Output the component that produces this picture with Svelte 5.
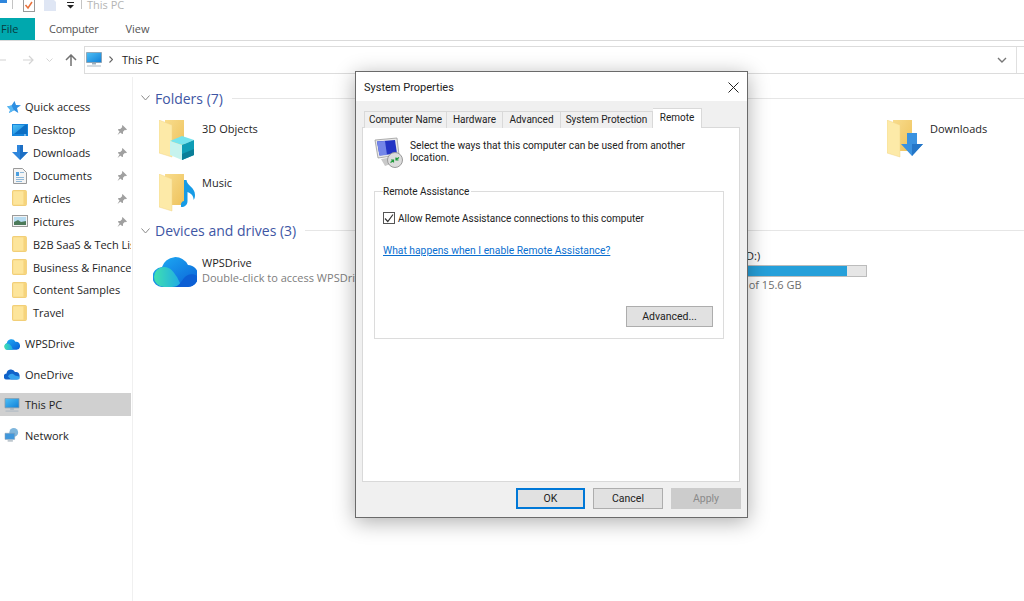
<script>
	const pinned = [
		{ name: 'Desktop', icon: 'desktop', pin: true },
		{ name: 'Downloads', icon: 'down', pin: true },
		{ name: 'Documents', icon: 'doc', pin: true },
		{ name: 'Articles', icon: 'smallfolder', pin: true },
		{ name: 'Pictures', icon: 'pics', pin: true },
		{ name: 'B2B SaaS & Tech Lis', icon: 'smallfolder' },
		{ name: 'Business & Finance', icon: 'smallfolder' },
		{ name: 'Content Samples', icon: 'smallfolder' },
		{ name: 'Travel', icon: 'smallfolder' }
	];
	const roots = [
		{ name: 'WPSDrive', icon: 'cloud' },
		{ name: 'OneDrive', icon: 'onedrive' },
		{ name: 'This PC', icon: 'monitor', active: true },
		{ name: 'Network', icon: 'network' }
	];
	const tabs = ['Computer Name', 'Hardware', 'Advanced', 'System Protection', 'Remote'];
	const tabWidths = [83, 56, 58, 92, 49];
	let allow = $state(true);
</script>

<svg class="defs" width="0" height="0">
	<defs>
		<linearGradient id="fold" x1="0" y1="0" x2="1" y2="1"><stop offset="0" stop-color="#f8dc8c" /><stop offset="1" stop-color="#eec25c" /></linearGradient>
		<linearGradient id="wps1" x1="0" y1="0" x2="1" y2="1"><stop offset="0" stop-color="#1fb0f5" /><stop offset="1" stop-color="#0a5fd6" /></linearGradient>
		<linearGradient id="wps2" x1="0" y1="0" x2="1" y2="0"><stop offset="0" stop-color="#3fe0b0" /><stop offset="1" stop-color="#1ea8e8" /></linearGradient>
		<linearGradient id="screen" x1="0" y1="0" x2="1" y2="1"><stop offset="0" stop-color="#4fc0f5" /><stop offset="1" stop-color="#0f7fd8" /></linearGradient>
		<symbol id="bigfolder" viewBox="0 0 36 40">
			<path d="M6 0H25V31H6Z" fill="url(#fold)" />
			<path d="M0 0 13 5V37L0 33Z" fill="#fdeaa8" stroke="#f2d488" stroke-width=".5" />
		</symbol>
		<symbol id="smallfolder" viewBox="0 0 14 14">
			<rect x=".5" y=".5" width="12" height="13" rx="1" fill="#fde59b" stroke="#f2cf78" />
			<path d="M10 1h2.500v12H10Z" fill="#f6d47c" />
		</symbol>
		<symbol id="desktop" viewBox="0 0 16 14">
			<path d="M0 1h16v12H0Z" fill="#1685dc" />
			<path d="M1 2h14v9H1Z" fill="url(#screen)" />
			<path d="M2 11 13 2h2v9Z" fill="#0c6fc4" />
			<path d="M12 11.500h2v1h-2Z" fill="#cfe6f8" />
		</symbol>
		<symbol id="down" viewBox="0 0 16 16">
			<path d="M5 0h6v7h5l-8 8-8-8h5Z" fill="#2f86dc" />
			<path d="M8 0h3v7h5l-8 8Z" fill="#1d6fc4" />
		</symbol>
		<symbol id="doc" viewBox="0 0 14 16">
			<path d="M.5.500h9l4 4v11H.5Z" fill="#f4f4f4" stroke="#9a9a9a" />
			<path d="M3 4h3v4H3Z" fill="#4a9fe0" />
			<path d="M7 4h4v1H7ZM3 9h8v1H3ZM3 11h8v1H3ZM3 13h6v1H3Z" fill="#8fb8d8" />
		</symbol>
		<symbol id="pics" viewBox="0 0 16 12">
			<rect x=".5" y=".5" width="15" height="11" fill="#f3f3f3" stroke="#9b9b9b" />
			<rect x="2" y="2" width="12" height="8" fill="#b7dcf2" />
			<path d="M2 10V7l4-2 3 2 5-1v4Z" fill="#4c7a5a" />
		</symbol>
		<symbol id="star" viewBox="0 0 14 12">
			<path d="M7.500 0 9 4l5 .3-4 2.800L11.300 12 7 9.200 2 12l2-4.500L0 5.500l4.500-1Z" fill="#2d8fe2" />
			<path d="M0 5.500 4.500 4.600 7 9.200 2 12l1-3Z" fill="#59b7f2" />
		</symbol>
		<symbol id="pin" viewBox="0 0 10 10">
			<path d="M5.500 0 10 4.500 8.800 5.200 8 4.800 6 6.800 6 8.700 5 9 1 5 1.400 4 3.300 4 5.300 2 4.900 1.200ZM2.500 6.500l1 1-3 2.500Z" fill="#a0a0a0" />
		</symbol>
		<symbol id="monitor" viewBox="0 0 16 15">
			<path d="M.5.500h15v10H.5Z" fill="url(#screen)" stroke="#8a9aa8" stroke-width=".8" />
			<path d="M6 11h4v1.500H6Z" fill="#9cb0bf" />
			<path d="M1 13.500h14v1H1Z" fill="#a9b7c2" />
		</symbol>
		<symbol id="cloud" viewBox="0 0 14 10">
			<path d="M3 10a3 3 0 0 1-.5-5.800A4 4 0 0 1 10 3a3.500 3.500 0 0 1 1 7Z" fill="url(#wps1)" />
			<path d="M3 10a2.700 2.700 0 0 1 0-5.400c1.500 0 2.500 1 3.500 2.400L8 10Z" fill="url(#wps2)" />
		</symbol>
		<symbol id="onedrive" viewBox="0 0 16 11">
			<path d="M3 11a3 3 0 0 1-.5-6A4.500 4.500 0 0 1 11 3.500 3.800 3.800 0 0 1 12.500 11Z" fill="#0f62c9" />
			<path d="M7 11 4 8c1-3 5-4 7-1l4 1c1 1 1 3-1 3Z" fill="#35a3ee" />
		</symbol>
		<symbol id="network" viewBox="0 0 16 16">
			<circle cx="10" cy="5" r="5" fill="#7fb6dc" />
			<path d="M0 6h11v7H0Z" fill="#3f97dc" stroke="#8ba0b0" stroke-width=".6" />
			<path d="M3 14h6v1.500H3Z" fill="#a8b4be" />
		</symbol>
		<symbol id="cube" viewBox="0 0 24 24">
			<path d="M0 5 12 0l12 4-12 5Z" fill="#74e4ee" />
			<path d="M0 5 12 9v15L0 19Z" fill="#c6f3ee" />
			<path d="M12 9 24 4v15l-12 5Z" fill="#0e9db6" />
			<path d="M12 18 24 13v6l-12 5Z" fill="#0a7e98" />
		</symbol>
		<symbol id="note" viewBox="0 0 14 27">
			<path d="M3 0h2.500c.5 6 8.500 7 8.500 15 0 2-.5 4-1.500 5 .5-4-3-7-6-8V21c0 4-3 6-6 6-2 0-.5-6 2.500-6Z" fill="#169be6" />
		</symbol>
		<symbol id="bigdown" viewBox="0 0 22 24">
			<path d="M6 0h10v11h6L11 23 0 11h6Z" fill="#3a92e0" />
			<path d="M11 11h11L11 23Z" fill="#2476c8" />
		</symbol>
		<symbol id="bigcloud" viewBox="0 0 44 33">
			<path d="M10 33A10 10 0 0 1 9 13 14 14 0 0 1 35 11 11 11 0 0 1 34 33Z" fill="url(#wps1)" />
			<path d="M11 33a10 10 0 0 1 0-20c7 0 10 6 13 10l5 10Z" fill="url(#wps2)" />
			<path d="M19 33c7 0 9-5 12-9 3-4 9-5 13-2 1 6-3 11-10 11Z" fill="#0c5fd4" />
		</symbol>
		<symbol id="rdp" viewBox="0 0 30 31">
			<path d="M1 3 23 1 25 18 4 21Z" fill="#e8e8e8" stroke="#8f8f8f" stroke-width=".7" />
			<path d="M3 4.500 21 3 23 16.500 5.500 18.500Z" fill="#2334c4" />
			<path d="M3 4.500 11 4 13 18 5.500 18.500Z" fill="#7486e8" />
			<path d="M7 22l12-2 3 5-11 4Z" fill="#c9c9c9" />
			<circle cx="21" cy="23" r="7.500" fill="#dcdcdc" stroke="#9a9a9a" />
			<path d="M16.500 25.500l3-2M19.500 25.500v-2.500h-2.500M25 20.500l-3 2M22 20.500v2.500h2.500" fill="none" stroke="#1f9a3a" stroke-width="1.200" />
		</symbol>
	</defs>
</svg>

<div class="explorer">
	<div class="qat">
		<svg class="qat-pc" width="8" height="10" viewBox="0 0 8 10"><path d="M0 0h7v7H0Z" fill="#2f86dc" /></svg>
		<span class="qat-sep first"></span>
		<svg class="qat-check" width="12" height="12" viewBox="0 0 12 12"><rect x=".5" y="-3" width="11" height="14.500" fill="#fff" stroke="#9a9a9a" /><path d="M2.500 5 5 8l4-6" fill="none" stroke="#e8703a" stroke-width="1.500" /></svg>
		<svg class="qat-doc" width="12" height="12" viewBox="0 0 12 12"><path d="M0 0h9l3 3v9H0Z" fill="#dfe6f4" /></svg>
		<svg class="qat-drop" width="7" height="7" viewBox="0 0 7 7"><path d="M0 0h7v1H0ZM0 3h7L3.500 6.500Z" fill="#222" /></svg>
		<span class="qat-sep"></span>
		<span class="qat-title">This PC</span>
	</div>

	<div class="ribbon">
		<div class="file-tab">File</div>
		<div class="rib-tab computer">Computer</div>
		<div class="rib-tab">View</div>
	</div>

	<div class="navbar">
		<svg class="nav-back" width="6" height="10" viewBox="0 0 6 10"><path d="M0 5h6" stroke="#d8d8d8" stroke-width="1.200" /></svg>
		<svg class="nav-fwd" width="11" height="10" viewBox="0 0 11 10"><path d="M0 5h10M6 1l4 4-4 4" fill="none" stroke="#d4d4d4" stroke-width="1.200" /></svg>
		<svg class="nav-hist" width="7" height="4" viewBox="0 0 7 4"><path d="M.5.500 3.500 3.500 6.500.5" fill="none" stroke="#d4d4d4" /></svg>
		<svg class="nav-up" width="12" height="12" viewBox="0 0 12 12"><path d="M6 12V1M1 6l5-5 5 5" fill="none" stroke="#727272" stroke-width="1.500" /></svg>
		<div class="address">
			<svg class="addr-pc" width="16" height="15"><use href="#monitor" /></svg>
			<svg class="addr-gt" width="4" height="7" viewBox="0 0 4 7"><path d="M.5.500 3.500 3.500.5 6.500" fill="none" stroke="#666" stroke-width="1.100" /></svg>
			<span class="addr-text">This PC</span>
			<svg class="addr-chev" width="10" height="6" viewBox="0 0 10 6"><path d="M1 1l4 4 4-4" fill="none" stroke="#777" stroke-width="1.400" /></svg>
			<span class="addr-div"></span>
		</div>
	</div>

	<div class="main">
		<nav class="sidebar">
			<div class="row top">
				<svg width="14" height="12"><use href="#star" /></svg>
				<span>Quick access</span>
			</div>
			{#each pinned as item}
				<div class="row sub">
					<svg class="row-icon" width="16" height="16"><use href={'#' + item.icon} /></svg>
					<span class="row-name">{item.name}</span>
					{#if item.pin}
						<svg class="pin" width="10" height="10"><use href="#pin" /></svg>
					{/if}
				</div>
			{/each}
			{#each roots as root}
				<div class="row top root" class:active={root.active}>
					<svg width="16" height="14"><use href={'#' + root.icon} /></svg>
					<span>{root.name}</span>
				</div>
			{/each}
		</nav>

		<section class="content">
			<div class="group-head">
				<svg width="9" height="6" viewBox="0 0 9 6"><path d="M.5.500 4.500 5 8.500.5" fill="none" stroke="#8a8a8a" /></svg>
				<span>Folders (7)</span>
				<i></i>
			</div>
			<div class="tiles">
				<div class="tile">
					<div class="tile-icon">
						<svg width="36" height="40"><use href="#bigfolder" /></svg>
						<svg class="badge cube" width="24" height="24"><use href="#cube" /></svg>
					</div>
					<span>3D Objects</span>
				</div>
				<div class="tile"></div>
				<div class="tile"></div>
				<div class="tile">
					<div class="tile-icon">
						<svg width="36" height="40"><use href="#bigfolder" /></svg>
						<svg class="badge bigdown" width="22" height="24"><use href="#bigdown" /></svg>
					</div>
					<span>Downloads</span>
				</div>
				<div class="tile">
					<div class="tile-icon">
						<svg width="36" height="40"><use href="#bigfolder" /></svg>
						<svg class="badge note" width="14" height="27"><use href="#note" /></svg>
					</div>
					<span>Music</span>
				</div>
			</div>

			<div class="group-head devices">
				<svg width="9" height="6" viewBox="0 0 9 6"><path d="M.5.500 4.500 5 8.500.5" fill="none" stroke="#8a8a8a" /></svg>
				<span>Devices and drives (3)</span>
				<i></i>
			</div>
			<div class="drives">
				<div class="drive">
					<svg class="drive-icon" width="44" height="33"><use href="#bigcloud" /></svg>
					<div>
						<div class="drive-name">WPSDrive</div>
						<div class="drive-sub">Double-click to access WPSDrive</div>
					</div>
				</div>
				<div class="drive"></div>
				<div class="drive disk">
					<div class="disk-info">
						<div class="disk-name">USB Drive (D:)</div>
						<div class="disk-bar"><div class="disk-fill" style="width: 89%"></div></div>
						<div class="disk-sub">1.9 GB free of 15.6 GB</div>
					</div>
				</div>
			</div>
		</section>
	</div>

	<div class="dialog">
		<header class="dlg-title">
			<span>System Properties</span>
			<svg width="11" height="11" viewBox="0 0 11 11"><path d="M.5.500 10.500 10.500M10.500.5.500 10.500" stroke="#222" stroke-width="1" /></svg>
		</header>
		<div class="dlg-body">
			<div class="dlg-tabs">
				{#each tabs as tab, i}
					<div class="dlg-tab" class:selected={tab === 'Remote'} style="width: {tabWidths[i]}px">{tab}</div>
				{/each}
			</div>
			<div class="panel">
				<div class="intro">
					<svg width="30" height="31"><use href="#rdp" /></svg>
					<p>Select the ways that this computer can be used from another location.</p>
				</div>
				<fieldset class="assist">
					<legend>Remote Assistance</legend>
					<label class="check">
						<input type="checkbox" bind:checked={allow} />
						<span class="box">
							{#if allow}
								<svg width="10" height="10" viewBox="0 0 10 10"><path d="M1 5.500 3.800 8.500 9 1.500" fill="none" stroke="#333" stroke-width="1.200" /></svg>
							{/if}
						</span>
						Allow Remote Assistance connections to this computer
					</label>
					<a href="#help" class="link">What happens when I enable Remote Assistance?</a>
					<div class="adv-row">
						<button class="btn adv">Advanced...</button>
					</div>
				</fieldset>
			</div>
			<footer class="dlg-foot">
				<button class="btn default">OK</button>
				<button class="btn">Cancel</button>
				<button class="btn" disabled>Apply</button>
			</footer>
		</div>
	</div>
</div>

<style>
	:global(body) {
		margin: 0;
		background: #fff;
	}
	.defs {
		position: absolute;
	}
	.explorer {
		position: relative;
		width: 1024px;
		height: 601px;
		overflow: hidden;
		background: #fff;
		font-family: 'Open Sans', 'Noto Sans', sans-serif;
		font-size: 11px;
		color: #1e1e1e;
	}
	.qat {
		height: 18px;
		display: flex;
		align-items: flex-start;
		position: relative;
	}
	.qat svg {
		flex: none;
	}
	.qat-pc {
		margin-top: -4px;
		margin-right: 4px;
	}
	.qat-sep {
		width: 1px;
		height: 9px;
		background: #c4c4c4;
		margin-left: 7px;
	}
	.qat-sep.first {
		margin-left: 0;
	}
	.qat-check {
		margin-left: 10px;
	}
	.qat-doc {
		margin-left: 9px;
		margin-top: -1px;
	}
	.qat-drop {
		margin-left: 11px;
		margin-top: 2px;
	}
	.qat-title {
		margin-left: 5px;
		margin-top: -3px;
		color: #b4b4b4;
		line-height: 15px;
	}
	.ribbon {
		height: 22px;
		display: flex;
		align-items: stretch;
		border-bottom: 1px solid #dadada;
	}
	.file-tab {
		width: 35px;
		background: #00a8ae;
		color: #083c40;
		line-height: 22px;
		padding-left: 1px;
		box-sizing: border-box;
	}
	.rib-tab {
		line-height: 22px;
		color: #555;
		margin-left: 28px;
	}
	.rib-tab.computer {
		margin-left: 14px;
		margin-right: -1px;
		letter-spacing: -0.3px;
	}
	.navbar {
		height: 35px;
		padding-top: 1px;
		display: flex;
		align-items: center;
	}
	.nav-fwd {
		margin-left: 17px;
	}
	.nav-hist {
		margin-left: 12px;
	}
	.nav-up {
		margin-left: 12px;
	}
	.address {
		margin-left: 7px;
		flex: 1;
		height: 28px;
		box-sizing: border-box;
		border: 1px solid #dcdcdc;
		border-right: none;
		display: flex;
		align-items: center;
		font-size: 11px;
		color: #222;
	}
	.addr-pc {
		margin-left: 1px;
	}
	.addr-gt {
		margin-left: 7px;
	}
	.addr-text {
		margin-left: 9px;
	}
	.addr-chev {
		margin-left: auto;
		margin-right: 9px;
	}
	.addr-div {
		width: 1px;
		height: 100%;
		background: #e0e0e0;
		margin-right: 7px;
	}
	.main {
		display: flex;
		height: 524px;
	}
	.sidebar {
		width: 133px;
		flex: none;
		box-sizing: border-box;
		padding-top: 18.400px;
		border-right: 1px solid #f0f0f0;
	}
	.row {
		height: 22.900px;
		width: 131px;
		display: flex;
		align-items: center;
		white-space: nowrap;
		overflow: hidden;
		box-sizing: border-box;
	}
	.row svg {
		flex: none;
	}
	.top {
		padding-left: 7px;
		gap: 4px;
	}
	.root {
		padding-left: 4px;
		gap: 5px;
		margin-top: 7.600px;
	}
	.sub + .root {
		margin-top: 8.200px;
	}
	.root.active {
		background: #d0d0d0;
	}
	.sub {
		padding-left: 12px;
		position: relative;
	}
	.row-name {
		margin-left: 5px;
	}
	.pin {
		position: absolute;
		right: 4px;
		top: 7px;
	}
	.content {
		flex: 1;
		padding-top: 13px;
		padding-left: 8px;
		min-width: 0;
	}
	.group-head {
		height: 16px;
		display: flex;
		align-items: center;
		font-size: 14px;
		color: #3e56a4;
		gap: 5px;
		white-space: nowrap;
	}
	.group-head i {
		flex: 1;
		height: 1px;
		background: #e6e6e6;
		margin-left: 4px;
	}
	.group-head.devices {
		margin-top: -1px;
	}
	.tiles {
		margin-top: 14px;
		margin-left: 12px;
		display: grid;
		grid-template-columns: repeat(4, 242.670px);
		grid-auto-rows: 50px;
		row-gap: 3.500px;
	}
	.tile {
		display: flex;
		padding-left: 6px;
		line-height: 18px;
	}
	.tile-icon {
		width: 43px;
		height: 40px;
		position: relative;
		flex: none;
	}
	.badge {
		position: absolute;
	}
	.cube {
		left: 11px;
		top: 16px;
	}
	.note {
		left: 22px;
		top: 6px;
	}
	.bigdown {
		left: 14px;
		top: 13px;
	}
	.drives {
		margin-top: 15px;
		margin-left: 12px;
		display: grid;
		grid-template-columns: repeat(4, 244px);
	}
	.drive {
		display: flex;
		line-height: 16px;
		white-space: nowrap;
	}
	.drive-icon {
		flex: none;
		margin-right: 5px;
	}
	.drive-name {
		margin-top: 1px;
	}
	.drive-sub {
		margin-top: -1px;
		color: #7d7d7d;
	}
	.disk-info {
		margin-left: 48px;
		margin-top: -6px;
	}
	.disk-bar {
		width: 178px;
		height: 12px;
		box-sizing: border-box;
		margin-top: 1px;
		background: #e6e6e6;
		border: 1px solid #bcbcbc;
	}
	.disk-fill {
		height: 100%;
		background: #26a0da;
	}
	.disk-sub {
		color: #6d6d6d;
	}
	.dialog {
		position: absolute;
		left: 355px;
		top: 71px;
		width: 393px;
		height: 447px;
		box-sizing: border-box;
		border: 1px solid #6a6a6a;
		background: #f0f0f0;
		box-shadow: 0 4px 20px rgba(0, 0, 0, 0.32);
		display: flex;
		flex-direction: column;
		font-family: Roboto, 'Open Sans', sans-serif;
		font-size: 10.200px;
		color: #222;
	}
	.dlg-title {
		height: 29px;
		box-sizing: border-box;
		flex: none;
		background: #fff;
		display: flex;
		align-items: center;
		justify-content: space-between;
		padding: 1px 8px 0 8px;
		font-size: 11px;
	}
	.dlg-body {
		flex: 1;
		display: flex;
		flex-direction: column;
		padding: 7px 7px 0 6px;
		min-height: 0;
	}
	.dlg-tabs {
		display: flex;
		align-items: flex-end;
		height: 20px;
		padding-left: 2px;
		position: relative;
		z-index: 1;
		margin-bottom: -1px;
		font-size: 10px;
	}
	.dlg-tab {
		height: 17px;
		line-height: 16px;
		box-sizing: border-box;
		text-align: center;
		background: #f0f0f0;
		border: 1px solid #d9d9d9;
		border-bottom: none;
		border-left: none;
		white-space: nowrap;
	}
	.dlg-tab:first-child {
		border-left: 1px solid #d9d9d9;
	}
	.dlg-tab.selected {
		height: 20px;
		line-height: 17px;
		background: #fff;
	}
	.panel {
		height: 355px;
		flex: none;
		box-sizing: border-box;
		background: #fff;
		border: 1px solid #d9d9d9;
		padding: 9px 11px 0;
	}
	.intro {
		display: flex;
		gap: 6px;
		line-height: 12px;
		height: 48px;
	}
	.intro svg {
		flex: none;
	}
	.intro p {
		margin: 3px 0 0;
		width: 300px;
	}
	.assist {
		margin: 0;
		height: 154px;
		box-sizing: border-box;
		border: 1px solid #dcdcdc;
		padding: 6px 9px 0 8px;
		display: flex;
		flex-direction: column;
		width: 350px;
	}
	.assist legend {
		padding: 0 2px 0 0;
		line-height: 13px;
		font-size: 10px;
	}
	.check {
		display: flex;
		align-items: center;
		gap: 3px;
		height: 14px;
		margin-top: 7px;
		font-size: 10px;
	}
	.check input {
		position: absolute;
		opacity: 0;
		width: 0;
		height: 0;
	}
	.box {
		width: 12px;
		height: 12px;
		box-sizing: border-box;
		border: 1px solid #555;
		background: #fff;
		display: flex;
		align-items: center;
		justify-content: center;
	}
	.link {
		margin-top: 19px;
		color: #0a6fd0;
		width: max-content;
		font-size: 10.300px;
	}
	.adv-row {
		margin-top: 49px;
		display: flex;
		justify-content: flex-end;
		padding-right: 1px;
	}
	.btn {
		width: 70px;
		height: 21px;
		padding: 0;
		box-sizing: border-box;
		background: #e1e1e1;
		border: 1px solid #adadad;
		font: inherit;
		font-size: 10.500px;
		color: #222;
	}
	.btn.adv {
		width: 87px;
	}
	.btn.default {
		width: 69px;
		border: 2px solid #0078d7;
	}
	.btn:disabled {
		background: #cccccc;
		color: #8a8a8a;
		border-color: #cccccc;
	}
	.dlg-foot {
		display: flex;
		justify-content: flex-end;
		gap: 8px;
		padding-top: 6px;
		margin-right: -1px;
	}
</style>
